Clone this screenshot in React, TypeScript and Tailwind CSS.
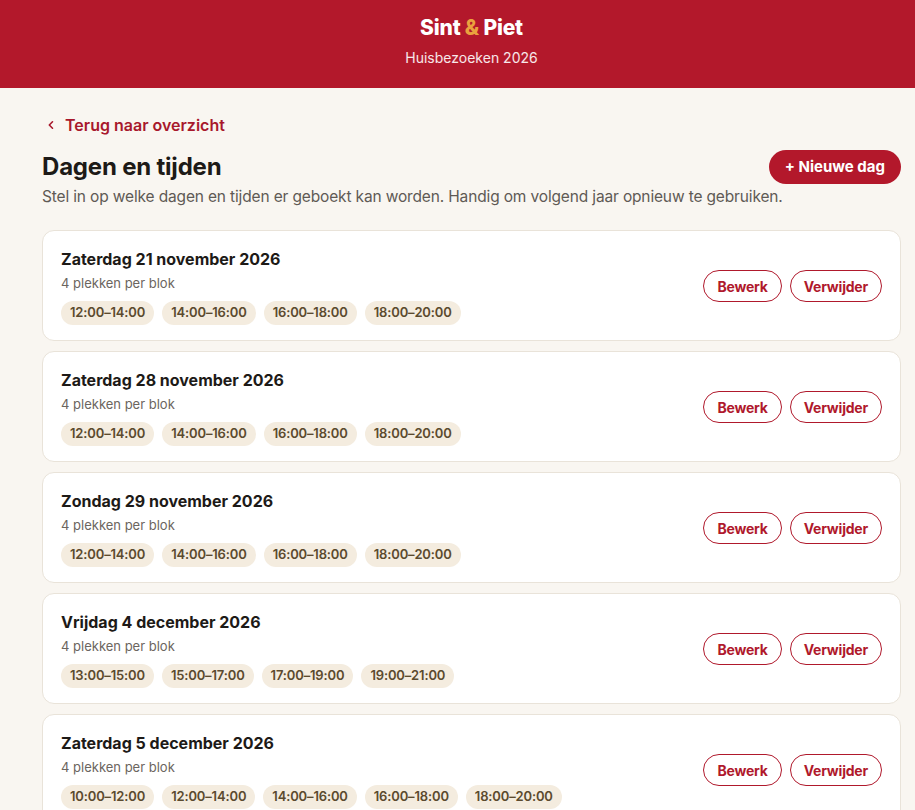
import type { JSX } from "react";

type Day = {
  id: number;
  label: string;
  spots: number;
  slots: string[];
};

const days: Day[] = [
  {
    id: 1,
    label: "Zaterdag 21 november 2026",
    spots: 4,
    slots: ["12:00–14:00", "14:00–16:00", "16:00–18:00", "18:00–20:00"],
  },
  {
    id: 2,
    label: "Zaterdag 28 november 2026",
    spots: 4,
    slots: ["12:00–14:00", "14:00–16:00", "16:00–18:00", "18:00–20:00"],
  },
  {
    id: 3,
    label: "Zondag 29 november 2026",
    spots: 4,
    slots: ["12:00–14:00", "14:00–16:00", "16:00–18:00", "18:00–20:00"],
  },
  {
    id: 4,
    label: "Vrijdag 4 december 2026",
    spots: 4,
    slots: ["13:00–15:00", "15:00–17:00", "17:00–19:00", "19:00–21:00"],
  },
  {
    id: 5,
    label: "Zaterdag 5 december 2026",
    spots: 4,
    slots: [
      "10:00–12:00",
      "12:00–14:00",
      "14:00–16:00",
      "16:00–18:00",
      "18:00–20:00",
    ],
  },
];

function DayCard({ day }: { day: Day }): JSX.Element {
  return (
    <li className="flex items-center justify-between bg-white border border-[#e9e3d9] rounded-[12px] pl-[18px] pr-[18px] pt-4 pb-[15px]">
      <div className="flex flex-col">
        <h2 className="text-[16px] leading-6 font-bold text-[#1d1a17]">
          {day.label}
        </h2>
        <p className="text-[13px] leading-5 text-[#6b6560] mt-[2px]">
          {day.spots} plekken per blok
        </p>
        <div className="flex gap-2 mt-2">
          {day.slots.map((slot) => (
            <span
              key={slot}
              className="h-6 px-[9px] flex items-center rounded-full bg-[#f4ecdf] text-[13px] font-semibold tracking-[-0.15px] text-[#5b4a2e]"
            >
              {slot}
            </span>
          ))}
        </div>
      </div>
      <div className="flex gap-2">
        <button className="h-8 px-[13px] rounded-full border border-[#b0192c] text-[#b0192c] text-[14px] font-bold tracking-[-0.2px] bg-white">
          Bewerk
        </button>
        <button className="h-8 px-[13px] rounded-full border border-[#b0192c] text-[#b0192c] text-[14px] font-bold tracking-[-0.2px] bg-white">
          Verwijder
        </button>
      </div>
    </li>
  );
}

export default function App(): JSX.Element {
  return (
    <div
      className="min-h-[810px] w-full overflow-hidden bg-[#f9f6f1]"
      style={{ fontFamily: "Inter, 'Noto Sans', sans-serif" }}
    >
      <div className="w-[943px]">
        <header className="h-[88px] bg-[#b3182b] flex flex-col items-center justify-center">
          <h1 className="text-[21px] leading-7 font-extrabold text-white tracking-[-0.2px] mt-[-6px]">
            Sint <span className="text-[#eaa23e]">&amp;</span> Piet
          </h1>
          <p className="text-[14px] leading-5 text-white/90 mt-[6px]">
            Huisbezoeken 2026
          </p>
        </header>

        <main className="px-[42px] pt-[25px]">
          <a
            href="#"
            className="flex items-center gap-[9px] text-[16px] leading-6 font-semibold text-[#a8182c] pl-[4px]"
          >
            <svg
              width="10"
              height="10"
              viewBox="0 0 10 10"
              fill="none"
              stroke="currentColor"
              strokeWidth="1.6"
              strokeLinecap="round"
              strokeLinejoin="round"
            >
              <path d="M6.5 1.8 3.3 5l3.2 3.2" />
            </svg>
            Terug naar overzicht
          </a>

          <div className="flex items-center justify-between mt-[13px]">
            <h1 className="text-[24px] leading-8 font-bold text-[#1d1a17] tracking-[-0.2px]">
              Dagen en tijden
            </h1>
            <button className="h-[34px] px-4 rounded-full bg-[#b3182b] text-white text-[15px] font-bold whitespace-nowrap">
              + Nieuwe dag
            </button>
          </div>
          <p className="text-[15.5px] leading-6 tracking-[-0.15px] text-[#5f5a55] mt-[1px]">
            Stel in op welke dagen en tijden er geboekt kan worden. Handig om
            volgend jaar opnieuw te gebruiken.
          </p>

          <ul className="flex flex-col gap-[10px] mt-[21px]">
            {days.map((day) => (
              <DayCard key={day.id} day={day} />
            ))}
          </ul>
        </main>
      </div>
    </div>
  );
}
